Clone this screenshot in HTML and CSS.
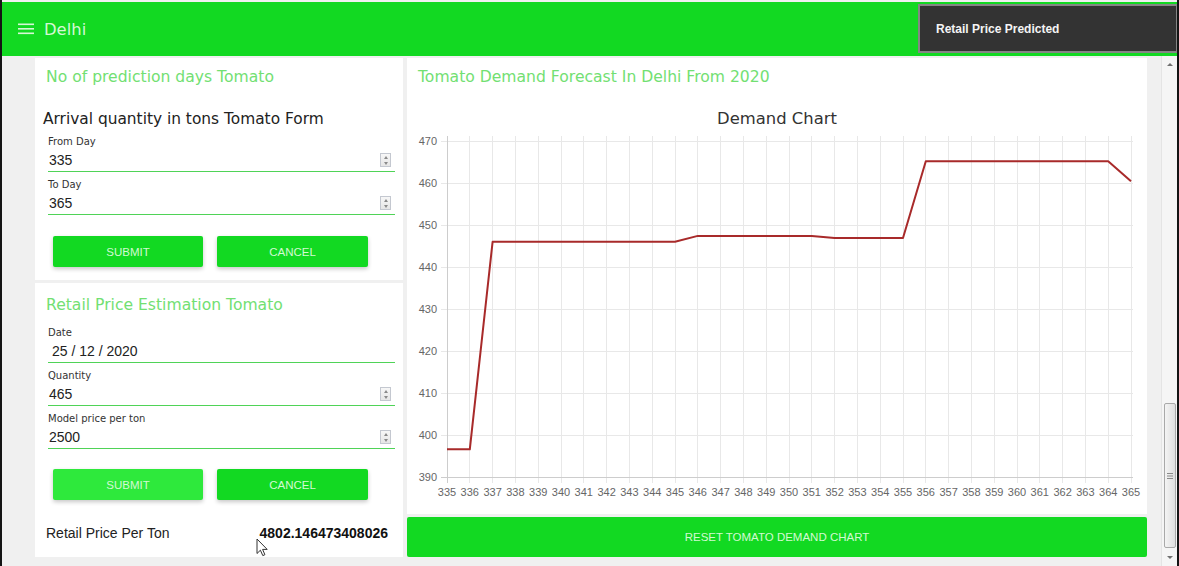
FILE: index.html
```html
<!DOCTYPE html>
<html lang="en">
<head>
<meta charset="utf-8">
<title>Delhi - Tomato Demand</title>
<link rel="stylesheet" href="styles.css">
</head>
<body>
<header class="topbar">
  <svg class="menu-icon" width="16" height="12" viewBox="0 0 16 12"><rect x="0" y="0.5" width="16" height="1.6"/><rect x="0" y="5" width="16" height="1.6"/><rect x="0" y="9.5" width="16" height="1.6"/></svg>
  <span class="city">Delhi</span>
</header>
<div class="toast">Retail Price Predicted</div>

<div class="main">
  <div class="content">
    <div class="left">
      <section class="card card-form">
        <h2 class="card-title">No of prediction days Tomato</h2>
        <h3 class="form-title">Arrival quantity in tons Tomato Form</h3>
        <div class="field">
          <span class="field-label">From Day</span>
          <div class="field-input"><span class="field-value">335</span><span class="spinner"><i class="up"></i><i class="down"></i></span></div>
        </div>
        <div class="field">
          <span class="field-label">To Day</span>
          <div class="field-input"><span class="field-value">365</span><span class="spinner"><i class="up"></i><i class="down"></i></span></div>
        </div>
        <div class="btn-row">
          <button class="btn">SUBMIT</button>
          <button class="btn btn-wide">CANCEL</button>
        </div>
      </section>
      <section class="card card-retail">
        <h2 class="card-title">Retail Price Estimation Tomato</h2>
        <div class="field field-first">
          <span class="field-label">Date</span>
          <div class="field-input"><span class="field-value field-date">25 / 12 / 2020</span></div>
        </div>
        <div class="field">
          <span class="field-label">Quantity</span>
          <div class="field-input"><span class="field-value">465</span><span class="spinner"><i class="up"></i><i class="down"></i></span></div>
        </div>
        <div class="field">
          <span class="field-label">Model price per ton</span>
          <div class="field-input"><span class="field-value">2500</span><span class="spinner"><i class="up"></i><i class="down"></i></span></div>
        </div>
        <div class="btn-row btn-row-2">
          <button class="btn btn-hover">SUBMIT</button>
          <button class="btn btn-wide">CANCEL</button>
        </div>
        <div class="result">
          <span class="result-label">Retail Price Per Ton</span>
          <span class="result-value">4802.146473408026</span>
        </div>
      </section>
    </div>
    <div class="right">
      <section class="card chart-card">
        <h2 class="card-title chart-title">Tomato Demand Forecast In Delhi From 2020</h2>
        <svg class="chart" width="740" height="428" viewBox="407 86 740 428">
          <text class="chart-heading" x="777" y="124" text-anchor="middle">Demand Chart</text>
          <g shape-rendering="crispEdges">
            <path class="grid" d="M441 141H1133M441 183H1133M441 225H1133M441 267H1133M441 309H1133M441 351H1133M441 393H1133M441 435H1133"/>
            <path class="grid" d="M469.8 136V483M492.6 136V483M515.4 136V483M538.2 136V483M561 136V483M583.8 136V483M606.6 136V483M629.4 136V483M652.2 136V483M675 136V483M697.8 136V483M720.6 136V483M743.4 136V483M766.2 136V483M789 136V483M811.8 136V483M834.6 136V483M857.4 136V483M880.2 136V483M903 136V483M925.8 136V483M948.6 136V483M971.4 136V483M994.2 136V483M1017 136V483M1039.8 136V483M1062.6 136V483M1085.4 136V483M1108.2 136V483M1131 136V483"/>
            <path class="axis" d="M447 136V483M441 477H1133"/>
          </g>
          <g class="ylabels" text-anchor="end">
            <text x="437" y="145">470</text>
            <text x="437" y="187">460</text>
            <text x="437" y="229">450</text>
            <text x="437" y="271">440</text>
            <text x="437" y="313">430</text>
            <text x="437" y="355">420</text>
            <text x="437" y="397">410</text>
            <text x="437" y="439">400</text>
            <text x="437" y="481">390</text>
          </g>
          <g class="xlabels" text-anchor="middle">
            <text x="447" y="496">335</text>
            <text x="469.8" y="496">336</text>
            <text x="492.6" y="496">337</text>
            <text x="515.4" y="496">338</text>
            <text x="538.2" y="496">339</text>
            <text x="561" y="496">340</text>
            <text x="583.8" y="496">341</text>
            <text x="606.6" y="496">342</text>
            <text x="629.4" y="496">343</text>
            <text x="652.2" y="496">344</text>
            <text x="675" y="496">345</text>
            <text x="697.8" y="496">346</text>
            <text x="720.6" y="496">347</text>
            <text x="743.4" y="496">348</text>
            <text x="766.2" y="496">349</text>
            <text x="789" y="496">350</text>
            <text x="811.8" y="496">351</text>
            <text x="834.6" y="496">352</text>
            <text x="857.4" y="496">353</text>
            <text x="880.2" y="496">354</text>
            <text x="903" y="496">355</text>
            <text x="925.8" y="496">356</text>
            <text x="948.6" y="496">357</text>
            <text x="971.4" y="496">358</text>
            <text x="994.2" y="496">359</text>
            <text x="1017" y="496">360</text>
            <text x="1039.8" y="496">361</text>
            <text x="1062.6" y="496">362</text>
            <text x="1085.4" y="496">363</text>
            <text x="1108.2" y="496">364</text>
            <text x="1131" y="496">365</text>
          </g>
          <polyline class="series" points="447,449.3 469.8,449.3 492.6,241.8 675,241.8 697.8,235.9 811.8,235.9 834.6,238 903,238 925.8,161.2 1108.2,161.2 1131,181.3"/>
        </svg>
      </section>
      <button class="reset">RESET TOMATO DEMAND CHART</button>
    </div>
  </div>
  <div class="scrollbar">
    <div class="sb-btn"><i class="sb-up"></i></div>
    <div class="sb-track">
      <div class="sb-thumb">
        <svg width="6" height="6" viewBox="0 0 6 6"><path d="M0 0.5H6M0 3H6M0 5.5H6" stroke="#8a8a8a" stroke-width="1"/></svg>
      </div>
    </div>
    <div class="sb-btn"><i class="sb-down"></i></div>
  </div>
</div>

<svg class="cursor" width="13" height="19" viewBox="0 0 13 19"><path d="M1 1V15.5L4.4 12.2L6.8 17.6L8.9 16.7L6.6 11.4H11.2Z" fill="#fff" stroke="#333" stroke-width="1" stroke-linejoin="round"/></svg>
</body>
</html>
```

FILE: styles.css
```css
* { box-sizing: border-box; }

html, body { margin: 0; padding: 0; }

body {
  width: 1179px;
  height: 566px;
  overflow: hidden;
  position: relative;
  background: #f0f0f0;
  border-left: 2px solid #141414;
  border-right: 2px solid #141414;
  padding-top: 2px;
  font-family: "DejaVu Sans", "Noto Sans", sans-serif;
  color: #222;
}

.topbar {
  height: 54px;
  background: #12d922;
  display: flex;
  align-items: center;
  gap: 10px;
  padding-left: 16px;
  color: #d4f8d4;
}

.menu-icon { fill: #d6f8d6; display: block; }

.city { font-size: 16.4px; line-height: 20px; margin-top: 1px; }

.toast {
  position: absolute;
  top: 4px;
  left: 916px;
  width: 260px;
  height: 49px;
  background: #333;
  border: 2px solid #858585;
  color: #f4f4f4;
  font-family: "Liberation Sans", Arial, sans-serif;
  font-weight: bold;
  font-size: 12px;
  display: flex;
  align-items: center;
  padding-left: 16px;
}

.main {
  display: flex;
  height: 510px;
}

.content {
  display: flex;
  gap: 4px;
  padding: 2px 0 0 33px;
}

.left {
  width: 368px;
  display: flex;
  flex-direction: column;
  gap: 3px;
}

.card { background: #fff; }

.card-title {
  margin: 0 0 0 11px;
  font-size: 15.6px;
  line-height: 20px;
  font-weight: normal;
  color: #72e072;
  white-space: nowrap;
}

.card-form { height: 222px; padding-top: 9px; }

.form-title {
  margin: 22px 0 0 8px;
  font-size: 15.4px;
  line-height: 20px;
  font-weight: normal;
  color: #222;
  white-space: nowrap;
}

.field { margin: 7px 8px 0 13px; }
.form-title + .field { margin-top: 7px; }
.field-first { margin-top: 13px; }

.field-label {
  display: block;
  font-size: 10px;
  line-height: 12px;
  color: #333;
  white-space: nowrap;
}

.field-input {
  display: flex;
  align-items: center;
  justify-content: space-between;
  margin-top: 4px;
  padding-bottom: 3px;
  border-bottom: 1px solid #4fd357;
}

.field-value {
  font-family: "Liberation Sans", Arial, sans-serif;
  font-size: 14px;
  line-height: 16px;
  color: #222;
  padding-left: 1px;
}

.field-date { padding-left: 4px; }

.spinner {
  width: 11px;
  height: 14px;
  margin-right: 4px;
  border: 1px solid #c4c8d0;
  background: linear-gradient(#f7f7f7, #e6e6e6);
  display: flex;
  flex-direction: column;
  align-items: center;
  justify-content: space-around;
}

.spinner i {
  display: block;
  width: 0;
  height: 0;
  border-left: 2.5px solid transparent;
  border-right: 2.5px solid transparent;
}

.spinner .up { border-bottom: 3px solid #8a8a8a; }
.spinner .down { border-top: 3px solid #8a8a8a; }

.btn-row {
  display: flex;
  gap: 14px;
  margin: 21px 0 0 18px;
}

.btn-row-2 { margin-top: 20px; }

.btn {
  width: 150px;
  height: 31px;
  border: none;
  border-radius: 2px;
  background: #12d922;
  color: #d2f9d2;
  font-family: "Liberation Sans", Arial, sans-serif;
  font-size: 11.5px;
  box-shadow: 0 2px 4px rgba(0, 0, 0, 0.22);
  padding: 0;
}

.btn-wide { width: 151px; }

.btn-hover { background: #2ee93c; }

.card-retail { height: 274px; padding-top: 12px; }

.card-retail .field-first { margin-top: 12px; }

.result {
  display: flex;
  justify-content: space-between;
  align-items: center;
  margin: 23px 15px 0 11px;
  line-height: 20px;
  font-family: "Liberation Sans", Arial, sans-serif;
}

.result-label { font-size: 14px; color: #222; }

.result-value { font-size: 14px; font-weight: bold; color: #111; }

.right {
  width: 740px;
  display: flex;
  flex-direction: column;
  gap: 3px;
}

.chart-card { height: 456px; padding-top: 8px; }

.chart-title { position: relative; top: 1px; }

.chart { display: block; }

.chart-heading {
  font-family: "DejaVu Sans", sans-serif;
  font-size: 16.4px;
  fill: #333;
}

.grid { stroke: #e8e8e8; stroke-width: 1; fill: none; }
.axis { stroke: #cdcdcd; stroke-width: 1; fill: none; }

.ylabels, .xlabels {
  font-family: "Liberation Sans", Arial, sans-serif;
  font-size: 11px;
  fill: #666;
}

.series {
  fill: none;
  stroke: #a82a2a;
  stroke-width: 2;
  stroke-linejoin: round;
}

.reset {
  height: 40px;
  border: none;
  border-radius: 2px;
  background: #12d922;
  color: #d2f9d2;
  font-family: "Liberation Sans", Arial, sans-serif;
  font-size: 11.5px;
  padding: 0;
}

.scrollbar {
  margin-left: auto;
  width: 16px;
  display: flex;
  flex-direction: column;
  background: #f5f5f5;
  border-left: 1px solid #e4e4e4;
}

.sb-btn {
  height: 17px;
  display: flex;
  align-items: center;
  justify-content: center;
}

.sb-btn i {
  display: block;
  width: 0;
  height: 0;
  border-left: 3px solid transparent;
  border-right: 3px solid transparent;
}

.sb-up { border-bottom: 3px solid #707070; }
.sb-down { border-top: 3px solid #707070; }

.sb-track {
  flex: 1;
  padding: 330px 0 0 2px;
}

.sb-thumb {
  width: 12px;
  height: 145px;
  border: 1px solid #a9a9a9;
  border-radius: 2px;
  background: linear-gradient(to right, #f4f4f4, #dedede);
  display: flex;
  align-items: center;
  justify-content: center;
}

.sb-thumb svg { display: block; }

.cursor {
  position: absolute;
  left: 254px;
  top: 538px;
}
```
